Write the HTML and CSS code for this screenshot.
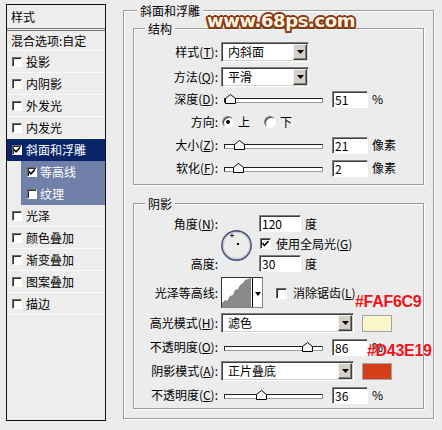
FILE: index.html
```html
<!DOCTYPE html>
<html lang="zh-CN">
<head>
<meta charset="utf-8">
<title>图层样式</title>
<link rel="stylesheet" href="styles.css">
</head>
<body>
<div class="dialog">
  <div class="sidebar">
    <div class="side-head">样式</div>
    <div class="side-row blend">混合选项:自定</div>
    <div class="side-row"><span class="cb"></span>投影</div>
    <div class="side-row"><span class="cb"></span>内阴影</div>
    <div class="side-row"><span class="cb"></span>外发光</div>
    <div class="side-row"><span class="cb"></span>内发光</div>
    <div class="side-row sel"><span class="cb"><svg width="8" height="8" viewBox="0 0 8 8"><polyline points="1,3.5 3,5.8 7,1.5" fill="none" stroke="#000" stroke-width="1.6"/></svg></span>斜面和浮雕</div>
    <div class="side-row sub"><span class="cb"><svg width="8" height="8" viewBox="0 0 8 8"><polyline points="1,3.5 3,5.8 7,1.5" fill="none" stroke="#000" stroke-width="1.6"/></svg></span>等高线</div>
    <div class="side-row sub"><span class="cb"></span>纹理</div>
    <div class="side-row"><span class="cb"></span>光泽</div>
    <div class="side-row"><span class="cb"></span>颜色叠加</div>
    <div class="side-row"><span class="cb"></span>渐变叠加</div>
    <div class="side-row"><span class="cb"></span>图案叠加</div>
    <div class="side-row"><span class="cb"></span>描边</div>
  </div>

  <div class="main">
    <div class="group outer">
      <div class="legend outer-legend"><span>斜面和浮雕</span></div>

      <div class="group struct">
        <div class="legend"><span>结构</span></div>
        <div class="body struct-body">
          <div class="row tall">
            <div class="lab">样式(<u>T</u>):</div>
            <div class="select w88"><span class="val">内斜面</span><span class="btn"><svg width="7" height="4" viewBox="0 0 7 4"><polygon points="0,0 7,0 3.5,4" fill="#000"/></svg></span></div>
          </div>
          <div class="row tall">
            <div class="lab">方法(<u>Q</u>):</div>
            <div class="select w88"><span class="val">平滑</span><span class="btn"><svg width="7" height="4" viewBox="0 0 7 4"><polygon points="0,0 7,0 3.5,4" fill="#000"/></svg></span></div>
          </div>
          <div class="row tight">
            <div class="lab">深度(<u>D</u>):</div>
            <div class="slider"><span class="track"></span><svg class="thumb" style="left:1px" width="11" height="10" viewBox="0 0 11 10"><polygon points="0.5,9.5 0.5,4.5 5.5,0.5 10.5,4.5 10.5,9.5" fill="#f6f6f6" stroke="#000"/></svg></div>
            <div class="input">51</div>
            <div class="unit">%</div>
          </div>
          <div class="row">
            <div class="lab">方向:</div>
            <span class="radio on"></span><span class="rtext">上</span>
            <span class="radio second"></span><span class="rtext">下</span>
          </div>
          <div class="row">
            <div class="lab">大小(<u>Z</u>):</div>
            <div class="slider"><span class="track"></span><svg class="thumb" style="left:10px" width="11" height="10" viewBox="0 0 11 10"><polygon points="0.5,9.5 0.5,4.5 5.5,0.5 10.5,4.5 10.5,9.5" fill="#f6f6f6" stroke="#000"/></svg></div>
            <div class="input">21</div>
            <div class="unit">像素</div>
          </div>
          <div class="row">
            <div class="lab">软化(<u>F</u>):</div>
            <div class="slider"><span class="track"></span><svg class="thumb" style="left:9px" width="11" height="10" viewBox="0 0 11 10"><polygon points="0.5,9.5 0.5,4.5 5.5,0.5 10.5,4.5 10.5,9.5" fill="#f6f6f6" stroke="#000"/></svg></div>
            <div class="input">2</div>
            <div class="unit">像素</div>
          </div>
        </div>
      </div>

      <div class="group shadow">
        <div class="legend"><span>阴影</span></div>
        <div class="body shadow-body">
          <div class="angle">
            <div class="lab a1">角度(<u>N</u>):</div>
            <div class="lab a3">高度:</div>
            <div class="dial">
              <svg width="31" height="31" viewBox="0 0 31 31">
                <circle cx="15.5" cy="15.5" r="14.6" fill="#ececec" stroke="#4b5678" stroke-width="1.6"/>
                <circle cx="15.5" cy="15.5" r="13.2" fill="none" stroke="#c3c6d2" stroke-width="1"/>
                <path d="M11 3.5v4M9 5.5h4" stroke="#000" stroke-width="0.8"/>
                <rect x="16" y="13" width="2" height="2" fill="#000"/>
              </svg>
            </div>
            <div class="angle-c1"><div class="input w42">120</div><div class="unit">度</div></div>
            <div class="angle-c2"><span class="cb big"><svg width="9" height="9" viewBox="0 0 9 9"><polyline points="1.5,4 3.5,6.5 7.5,2" fill="none" stroke="#000" stroke-width="1.6"/></svg></span><span class="cbtext">使用全局光(<u>G</u>)</span></div>
            <div class="angle-c3"><div class="input w42">30</div><div class="unit">度</div></div>
          </div>

          <div class="row contour-row">
            <div class="lab">光泽等高线:</div>
            <div class="contour">
              <svg class="graph" width="30" height="29" viewBox="0 0 30 29">
                <path d="M0 29V25L3 22L5 23L8 18L11 17L13 12L16 11L18 7L21 5L23 2L26 1L29 0V29Z" fill="#8a8a8a"/>
              </svg>
              <span class="cbtn"><svg width="6" height="4" viewBox="0 0 6 4"><polygon points="0,0 6,0 3,4" fill="#000"/></svg></span>
            </div>
            <span class="cb big aa"></span><span class="cbtext aa-text">消除锯齿(<u>L</u>)</span>
          </div>

          <div class="row tall">
            <div class="lab">高光模式(<u>H</u>):</div>
            <div class="select w133"><span class="val">滤色</span><span class="btn"><svg width="7" height="4" viewBox="0 0 7 4"><polygon points="0,0 7,0 3.5,4" fill="#000"/></svg></span></div>
            <span class="swatch hi"></span>
          </div>
          <div class="row">
            <div class="lab">不透明度(<u>O</u>):</div>
            <div class="slider"><span class="track"></span><svg class="thumb" style="left:78px" width="11" height="10" viewBox="0 0 11 10"><polygon points="0.5,9.5 0.5,4.5 5.5,0.5 10.5,4.5 10.5,9.5" fill="#f6f6f6" stroke="#000"/></svg></div>
            <div class="input">86</div>
            <div class="unit">%</div>
          </div>
          <div class="row tall">
            <div class="lab">阴影模式(<u>A</u>):</div>
            <div class="select w133"><span class="val">正片叠底</span><span class="btn"><svg width="7" height="4" viewBox="0 0 7 4"><polygon points="0,0 7,0 3.5,4" fill="#000"/></svg></span></div>
            <span class="swatch sh"></span>
          </div>
          <div class="row">
            <div class="lab">不透明度(<u>C</u>):</div>
            <div class="slider"><span class="track"></span><svg class="thumb" style="left:32px" width="11" height="10" viewBox="0 0 11 10"><polygon points="0.5,9.5 0.5,4.5 5.5,0.5 10.5,4.5 10.5,9.5" fill="#f6f6f6" stroke="#000"/></svg></div>
            <div class="input">36</div>
            <div class="unit">%</div>
          </div>
        </div>
      </div>
    </div>
  </div>
</div>

<div class="watermark">www.68ps.com</div>
<div class="note note1">#FAF6C9</div>
<div class="note note2">#D43E19</div>
</body>
</html>
```

FILE: styles.css
```css
* { box-sizing: border-box; }
html, body { margin: 0; padding: 0; }
body {
  position: relative;
  width: 442px;
  height: 430px;
  overflow: hidden;
  background: #ececec;
  color: #000;
  font-family: "Noto Sans CJK SC", "Noto Sans", sans-serif;
  font-size: 12px;
  line-height: 16px;
}
u { text-decoration: underline; text-underline-offset: 1px; }

.dialog { display: flex; align-items: flex-start; }

/* ---------- sidebar ---------- */
.sidebar {
  margin: 4px 0 0 6px;
  width: 100px;
  height: 417px;
  border: 1px solid #111;
  background: #ededed;
  display: flex;
  flex-direction: column;
}
.side-head {
  height: 26px;
  line-height: 23px;
  padding-left: 4px;
  border-bottom: 3px double #767676;
}
.side-row {
  height: 22px;
  display: flex;
  align-items: center;
  padding-left: 5px;
  border-bottom: 1px solid #fafafa;
  white-space: nowrap;
}
.side-row.blend { height: 20px; padding-left: 4px; }
.side-row .cb { margin-right: 4px; }
.side-row.sel { background: #0a246a; color: #fff; border-bottom-color: #0a246a; }
.side-row.sub {
  margin-left: 14px;
  padding-left: 6px;
  background: #7180a9;
  color: #fff;
  border-bottom-color: #7180a9;
}
.side-row.sub .cb { margin-right: 3px; }

/* checkbox */
.cb {
  flex: none;
  width: 10px;
  height: 10px;
  background: #fff;
  border: 1px solid;
  border-color: #6a6a6a #fff #fff #6a6a6a;
  box-shadow: inset 1px 1px 0 #303030;
  display: flex;
  align-items: center;
  justify-content: center;
}
.cb svg { display: block; }
.cb.big { width: 11px; height: 11px; }

/* ---------- main area ---------- */
.main { margin: 10px 0 0 17px; }
.group {
  border: 1px solid #9b9b9b;
  box-shadow: inset 1px 1px 0 #fff, 1px 1px 0 #fff;
}
.outer { width: 311px; height: 409px; padding: 0 9px; }
.legend { height: 0; display: flex; }
.legend span {
  margin-top: -8px;
  margin-left: 11px;
  height: 15px;
  line-height: 15px;
  padding: 0 3px;
  background: #ececec;
  white-space: nowrap;
}
.outer-legend span { margin-left: 4px; }

.struct { margin-top: 17px; height: 157px; }
.shadow { margin-top: 18px; height: 206px; }
.struct-body { padding-top: 13px; }
.shadow-body { padding-top: 11px; }

.row {
  display: flex;
  align-items: center;
  height: 18px;
  margin-top: 5px;
  white-space: nowrap;
}
.body > .row:first-child { margin-top: 0; }
.row.tall { height: 20px; }
.row.tight { margin-top: 3px; }

.lab { flex: none; width: 84px; text-align: right; white-space: nowrap; }

/* select */
.select {
  flex: none;
  margin-left: 3px;
  height: 20px;
  display: flex;
  align-items: center;
  background: #fff;
  border: 1px solid;
  border-color: #808080 #fff #fff #808080;
  box-shadow: inset 1px 1px 0 #404040, inset -1px -1px 0 #d4d0c8;
  padding-left: 6px;
}
.select.w88 { width: 88px; }
.select.w133 { width: 133px; }
.select .val { flex: 1; }
.btn {
  flex: none;
  width: 14px;
  height: 16px;
  margin-right: 1px;
  background: #d4d0c8;
  border: 1px solid;
  border-color: #f4f4f4 #404040 #404040 #f4f4f4;
  box-shadow: inset -1px -1px 0 #808080;
  display: flex;
  align-items: center;
  justify-content: center;
}
.btn svg { display: block; }

/* input */
.input {
  flex: none;
  margin-left: 9px;
  width: 36px;
  height: 17px;
  background: #fff;
  border: 1px solid;
  border-color: #808080 #fff #fff #808080;
  box-shadow: inset 1px 1px 0 #404040;
  padding-left: 2px;
  line-height: 15px;
}
.input.w42 { width: 42px; margin-left: 0; }
.unit { margin-left: 4px; }

/* slider */
.slider {
  flex: none;
  position: relative;
  margin-left: 6px;
  width: 99px;
  height: 18px;
  display: flex;
  align-items: center;
}
.track {
  display: block;
  width: 100%;
  height: 5px;
  margin-top: 3px;
  background: #fff;
  border: 1px solid;
  border-color: #202020 #9a9a9a #9a9a9a #202020;
}
.thumb { position: absolute; top: 4px; display: block; }

/* radios */
.radio {
  flex: none;
  width: 12px;
  height: 12px;
  margin-left: 4px;
  border-radius: 50%;
  background: #fff;
  border: 1px solid;
  border-color: #808080 #fff #fff #808080;
  box-shadow: inset 1px 1px 0 #404040;
  display: flex;
  align-items: center;
  justify-content: center;
}
.radio.on::after {
  content: "";
  width: 4px;
  height: 4px;
  border-radius: 50%;
  background: #000;
}
.radio.second { margin-left: 14px; }
.rtext { margin-left: 4px; }

/* angle block */
.angle {
  display: grid;
  grid-template-columns: 84px 41px auto;
  grid-template-rows: 17px 17px 17px;
  row-gap: 3px;
  align-items: center;
}
.a1 { grid-column: 1; grid-row: 1; }
.a3 { grid-column: 1; grid-row: 3; }
.dial {
  grid-column: 2;
  grid-row: 1 / 4;
  align-self: end;
  margin: 0 0 11px 3px;
  width: 31px;
  height: 31px;
}
.dial svg { display: block; }
.angle-c1, .angle-c2, .angle-c3 { display: flex; align-items: center; grid-column: 3; }
.angle-c1 { grid-row: 1; }
.angle-c2 { grid-row: 2; padding-left: 1px; }
.angle-c3 { grid-row: 3; }
.cbtext { margin-left: 5px; }

/* contour */
.row.contour-row { height: 31px; }
.contour {
  flex: none;
  margin-left: 3px;
  width: 42px;
  height: 31px;
  background: #fff;
  border: 1px solid;
  border-color: #303030 #808080 #808080 #303030;
  display: flex;
}
.contour .graph { display: block; align-self: flex-end; }
.cbtn {
  flex: none;
  width: 10px;
  border-left: 1px solid #000;
  display: flex;
  align-items: center;
  justify-content: center;
  padding-top: 2px;
}
.cbtn svg { display: block; }
.cb.aa { margin-left: 13px; margin-top: 1px; }
.aa-text { margin-left: 6px; }

/* swatches */
.swatch {
  flex: none;
  margin-left: 8px;
  width: 30px;
  height: 17px;
  border: 1px solid #a3a3a3;
}
.swatch.hi { background: #faf6c9; }
.swatch.sh { background: #d43e19; }

/* ---------- overlays ---------- */
.watermark {
  position: absolute;
  left: 207px;
  top: 9px;
  font-family: "DejaVu Sans", sans-serif;
  font-weight: bold;
  font-size: 18px;
  line-height: 24px;
  letter-spacing: -0.4px;
  color: #fff4e2;
  text-shadow:
    2px 0 0 #8a3812, -2px 0 0 #8a3812, 0 2px 0 #8a3812, 0 -2px 0 #8a3812,
    1.5px 1.5px 0 #8a3812, -1.5px 1.5px 0 #8a3812, 1.5px -1.5px 0 #8a3812, -1.5px -1.5px 0 #8a3812,
    1px 0 0 #a04a1c, -1px 0 0 #a04a1c, 0 1px 0 #a04a1c, 0 -1px 0 #a04a1c;
  white-space: nowrap;
}
.note {
  position: absolute;
  font-family: "Liberation Sans", Arial, sans-serif;
  font-weight: bold;
  font-size: 16px;
  line-height: 16px;
  letter-spacing: -0.3px;
  color: #f0141a;
  white-space: nowrap;
}
.note1 { left: 355px; top: 294px; }
.note2 { left: 367px; top: 343px; }
```
